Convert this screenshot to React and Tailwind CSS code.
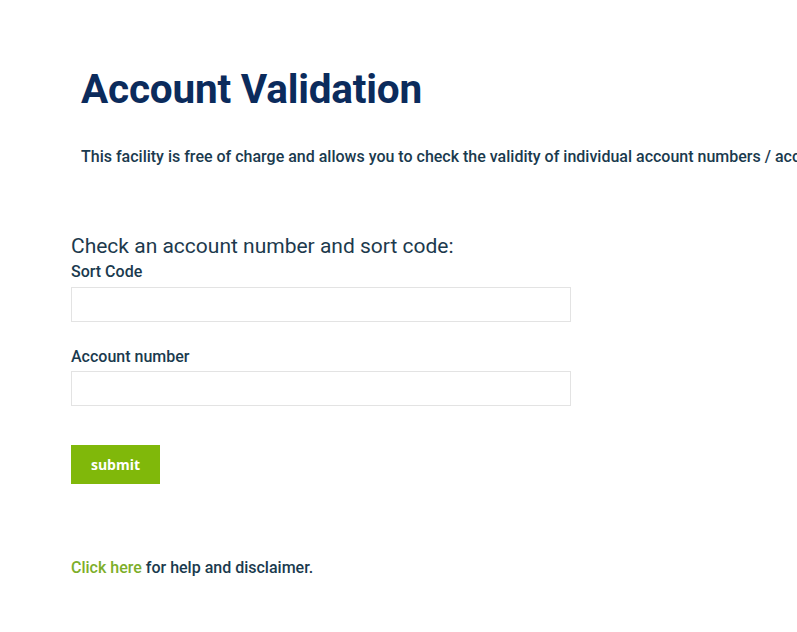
export default function App() {
  return (
    <div className="w-[797px] h-[632px] bg-white overflow-hidden" style={{ fontFamily: "Roboto, 'Liberation Sans', sans-serif" }}>
      <div className="pl-[81px] pt-[65px]">
        <h1 className="text-[40.5px] leading-[48px] font-bold text-[#0b2b5c] tracking-[-0.2px]">Account Validation</h1>
        <p className="mt-[34px] text-[16px] leading-[20px] font-medium text-[#1a3a4e] whitespace-nowrap">
          This facility is free of charge and allows you to check the validity of individual account numbers / account sort codes.
        </p>
      </div>
      <div className="pl-[71px] pt-[67px] w-[571px]">
        <h2 className="text-[21px] leading-[24px] text-[#1d3a4d]">Check an account number and sort code:</h2>
        <label className="block mt-[4px] text-[16px] leading-[20px] font-medium text-[#1a3a4e]">Sort Code</label>
        <input className="block mt-[5px] w-[500px] h-[35px] border border-[#e3e3e3] bg-white outline-none" />
        <label className="block mt-[25px] text-[16px] leading-[20px] font-medium text-[#1a3a4e]">Account number</label>
        <input className="block mt-[4px] w-[500px] h-[35px] border border-[#e3e3e3] bg-white outline-none" />
        <button className="block mt-[39px] w-[89px] h-[39px] bg-[#80b80a] text-white text-[14px] font-bold" style={{ fontFamily: "'Open Sans', sans-serif" }}>submit</button>
        <p className="mt-[74px] text-[16px] leading-[20px] font-medium text-[#1a3a4e]">
          <span className="text-[#7dae2a]">Click here</span> for help and disclaimer.
        </p>
      </div>
    </div>
  );
}
